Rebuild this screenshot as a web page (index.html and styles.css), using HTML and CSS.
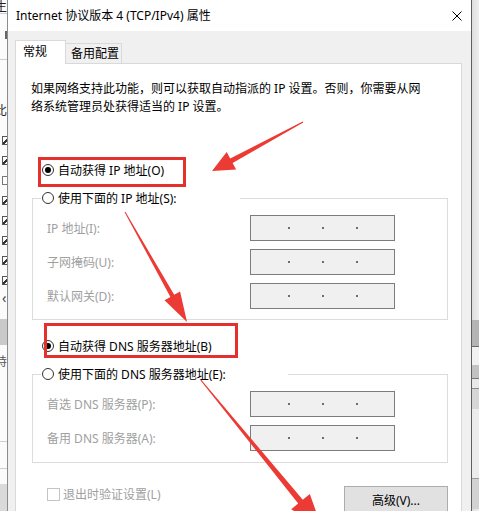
FILE: index.html
```html
<!DOCTYPE html>
<html lang="zh-CN">
<head>
<meta charset="utf-8">
<title>Internet 协议版本 4 (TCP/IPv4) 属性</title>
<link rel="stylesheet" href="styles.css">
</head>
<body>
<div class="screen">
  <div class="bg-left">
    <span class="bg-char c1">生</span>
    <div class="bg-line l1"></div>
    <div class="bg-mark"></div>
    <div class="bg-line l2"></div>
    <span class="bg-char c2">比</span>
    <div class="bg-checks">
      <span class="bg-check"></span>
      <span class="bg-check"></span>
      <span class="bg-check empty"></span>
      <span class="bg-check"></span>
      <span class="bg-check"></span>
      <span class="bg-check"></span>
      <span class="bg-check"></span>
      <span class="bg-check"></span>
    </div>
    <span class="bg-arrow">&lsaquo;</span>
    <div class="bg-block"></div>
    <span class="bg-char c3">持</span>
    <div class="bg-line l3"></div>
    <div class="bg-line l4"></div>
    <div class="bg-foot"></div>
  </div>

  <div class="window">
    <div class="titlebar">
      <span class="title">Internet 协议版本 4 (TCP/IPv4) 属性</span>
      <svg class="close" viewBox="0 0 10 10" aria-hidden="true">
        <path d="M0.5 0.5 L9.5 9.5 M9.5 0.5 L0.5 9.5" stroke="#000" stroke-width="1" fill="none"/>
      </svg>
    </div>
    <div class="body">
      <div class="tabs">
        <div class="tab tab-active">常规</div>
        <div class="tab tab-plain">备用配置</div>
      </div>
      <div class="panel">
        <p class="desc">如果网络支持此功能，则可以获取自动指派的 IP 设置。否则，你需要从网<br>络系统管理员处获得适当的 IP 设置。</p>

        <div class="radio-row row-auto-ip"><span class="radio checked"></span><span>自动获得 IP 地址(O)</span></div>

        <div class="group group-ip">
          <div class="radio-row legend legend-ip"><span class="radio"></span><span>使用下面的 IP 地址(S):</span></div>
          <div class="field"><span class="label">IP 地址(I):</span><span class="ipbox"><i></i><i></i><i></i></span></div>
          <div class="field"><span class="label">子网掩码(U):</span><span class="ipbox"><i></i><i></i><i></i></span></div>
          <div class="field"><span class="label">默认网关(D):</span><span class="ipbox"><i></i><i></i><i></i></span></div>
        </div>

        <div class="radio-row row-auto-dns"><span class="radio checked"></span><span>自动获得 DNS 服务器地址(B)</span></div>

        <div class="group group-dns">
          <div class="radio-row legend legend-dns"><span class="radio"></span><span>使用下面的 DNS 服务器地址(E):</span></div>
          <div class="field"><span class="label">首选 DNS 服务器(P):</span><span class="ipbox"><i></i><i></i><i></i></span></div>
          <div class="field"><span class="label">备用 DNS 服务器(A):</span><span class="ipbox"><i></i><i></i><i></i></span></div>
        </div>

        <div class="footer">
          <div class="check"><span class="checkbox"></span><span>退出时验证设置(L)</span></div>
          <div class="button">高级(V)...</div>
        </div>
      </div>
    </div>
  </div>

  <div class="bg-right">
    <div class="rb rb1"></div>
    <div class="rb rb2"></div>
    <div class="rb rb3"></div>
    <div class="rb rb4"></div>
    <div class="rb rb5"></div>
    <div class="rb rb6"></div>
    <div class="rb rb7"></div>
  </div>
</div>

<svg class="annot" viewBox="0 0 479 511" aria-hidden="true">
  <rect x="39.5" y="158.5" width="145" height="27" fill="none" stroke="#e5312e" stroke-width="3"/>
  <rect x="45.5" y="324.5" width="191" height="32" fill="none" stroke="#e5312e" stroke-width="3"/>
  <polygon fill="#ec3a35" points="302.7,121.4 230.2,158.5 226.7,151.9 212,171 236.1,169.5 232.6,162.9 303.3,122.5"/>
  <polygon fill="#ec3a35" points="124.6,212.2 170.4,297.0 164.5,300.3 187,322 180.1,291.5 174.2,294.8 125.4,211.8"/>
  <polygon fill="#ec3a35" points="199.6,379.3 298.2,503.6 291.2,509.3 322,528 309.8,494.1 302.8,499.8 200.4,378.7"/>
</svg>
</body>
</html>
```

FILE: styles.css
```css
* { box-sizing: border-box; }

html, body {
  margin: 0;
  padding: 0;
}

body {
  width: 479px;
  height: 511px;
  overflow: hidden;
  position: relative;
  background: #f2f2f2;
  font-family: "Noto Sans", "Noto Sans CJK SC", sans-serif;
  font-size: 12px;
  color: #000;
}

.screen {
  display: flex;
  height: 511px;
}

/* ---------- background window, left strip ---------- */
.bg-left {
  width: 7px;
  flex: none;
  background: #fbfbfb;
  overflow: hidden;
  display: flex;
  flex-direction: column;
}
.bg-char {
  display: block;
  height: 13px;
  line-height: 13px;
  margin-left: -5px;
  white-space: nowrap;
  color: #222;
}
.bg-line { height: 1px; background: #cfcfcf; flex: none; }
.l1 { margin-top: 0; }
.bg-mark { width: 2px; height: 8px; margin: 17px 0 0 5px; background: #666; flex: none; }
.l2 { margin-top: 20px; }
.c2 { margin-top: 44px; }
.bg-checks {
  display: flex;
  flex-direction: column;
  gap: 11px;
  margin-top: 19px;
  flex: none;
}
.bg-check {
  display: block;
  width: 9px;
  height: 9px;
  margin-left: 2px;
  border: 1px solid #555;
  background: linear-gradient(135deg, #fff 40%, #333 40%, #333 60%, #fff 60%);
}
.bg-check.empty { background: #fff; border-color: #777; }
.bg-arrow {
  display: block;
  margin: 6px 0 0 2px;
  height: 14px;
  line-height: 14px;
  font-size: 14px;
  color: #444;
}
.bg-block { height: 26px; margin-top: 14px; background: #c9c9c9; flex: none; }
.c3 { margin-top: 10px; color: #555; }
.l3 { margin-top: 73px; }
.l4 { margin-top: 26px; }
.bg-foot { margin-top: 15px; height: 40px; background: #dadada; flex: none; }

/* ---------- background window, right strip ---------- */
.bg-right {
  width: 7px;
  flex: none;
  background: linear-gradient(90deg, #dedede, #eeeeee);
  overflow: hidden;
  display: flex;
  flex-direction: column;
}
.rb { flex: none; }
.rb1 { margin-top: 320px; height: 27px; background: #b4b4b4; border-bottom: 1px solid #6a6a6a; }
.rb2 { height: 18px; background: #f1f1f1; }
.rb3 { height: 14px; background: #c2c2c2; border-bottom: 1px solid #777; }
.rb4 { height: 10px; background: #e8e8e8; border-bottom: 1px solid #8a8a8a; }
.rb5 { height: 20px; background: #d6d6d6; }
.rb6 { height: 70px; background: #ececec; border-bottom: 1px solid #999; }
.rb7 { height: 30px; background: #d2d2d2; }

/* ---------- dialog window ---------- */
.window {
  width: 465px;
  flex: none;
  border-left: 1px solid #8c8c8c;
  border-right: 1px solid #5f5f5f;
  background: #f0f0f0;
  display: flex;
  flex-direction: column;
}

.titlebar {
  height: 31px;
  flex: none;
  background: #fff;
  display: flex;
  align-items: center;
  justify-content: space-between;
  padding: 0 9px 0 8px;
}
.title { line-height: 16px; white-space: nowrap; }
.close { width: 10px; height: 10px; display: block; }

.body {
  flex: 1;
  padding: 9px 9px 0 7px;
}

.tabs {
  display: flex;
  align-items: flex-end;
  height: 23px;
  position: relative;
  z-index: 1;
}
.tab {
  border: 1px solid #d9d9d9;
  border-bottom: none;
  white-space: nowrap;
}
.tab-active {
  width: 51px;
  height: 24px;
  margin-bottom: -1px;
  padding-left: 7px;
  line-height: 22px;
  background: #fff;
}
.tab-plain {
  width: 57px;
  height: 20px;
  margin-left: -1px;
  padding-left: 5px;
  line-height: 19px;
  background: #f0f0f0;
}

.panel {
  background: #fff;
  border: 1px solid #d9d9d9;
  height: 470px;
}

.desc {
  margin: 16px 0 0 15px;
  line-height: 18px;
  white-space: nowrap;
}

.radio-row {
  display: flex;
  align-items: center;
  gap: 4px;
  height: 20px;
  white-space: nowrap;
}
.radio {
  width: 12px;
  height: 12px;
  flex: none;
  border: 1px solid #333;
  border-radius: 50%;
  background: #fff;
  display: flex;
  align-items: center;
  justify-content: center;
}
.radio.checked::after {
  content: "";
  width: 6px;
  height: 6px;
  border-radius: 50%;
  background: #000;
}

.row-auto-ip { margin: 44px 0 0 26px; }
.row-auto-dns { margin: 16px 0 0 26px; }

.group {
  width: 416px;
  margin: 18px 0 0 16px;
  border: 1px solid #dcdcdc;
}
.group-ip { padding-bottom: 10px; }
.group-dns { padding-bottom: 11px; }

.legend {
  margin: -11px 0 0 8px;
  padding-left: 1px;
  background: #fff;
}
.legend-ip { width: 199px; }
.legend-dns { width: 247px; }

.field {
  display: flex;
  align-items: center;
  height: 26px;
  margin-top: 8px;
  padding-left: 14px;
}
.legend + .field { margin-top: 7px; }

.label {
  width: 203px;
  flex: none;
  color: #a0a0a0;
  white-space: nowrap;
}

.ipbox {
  width: 145px;
  height: 26px;
  flex: none;
  border: 1px solid #7c7c7c;
  background: #f0f0f0;
  display: flex;
  align-items: center;
  gap: 32px;
  padding-left: 37px;
}
.ipbox i {
  display: block;
  width: 2px;
  height: 2px;
  background: #6e6e6e;
}

.footer {
  display: flex;
  justify-content: space-between;
  align-items: flex-start;
  margin: 23px 13px 0 31px;
}
.check {
  display: flex;
  align-items: center;
  gap: 3px;
  margin-top: 2px;
  line-height: 13px;
  color: #a0a0a0;
}
.checkbox {
  width: 13px;
  height: 13px;
  border: 1px solid #c4c4c4;
  background: #fff;
}
.button {
  width: 104px;
  height: 28px;
  border: 1px solid #adadad;
  background: #e1e1e1;
  display: flex;
  align-items: center;
  justify-content: center;
  white-space: nowrap;
}

/* ---------- annotation overlay ---------- */
.annot {
  position: absolute;
  left: 0;
  top: 0;
  width: 479px;
  height: 511px;
  pointer-events: none;
}
```
